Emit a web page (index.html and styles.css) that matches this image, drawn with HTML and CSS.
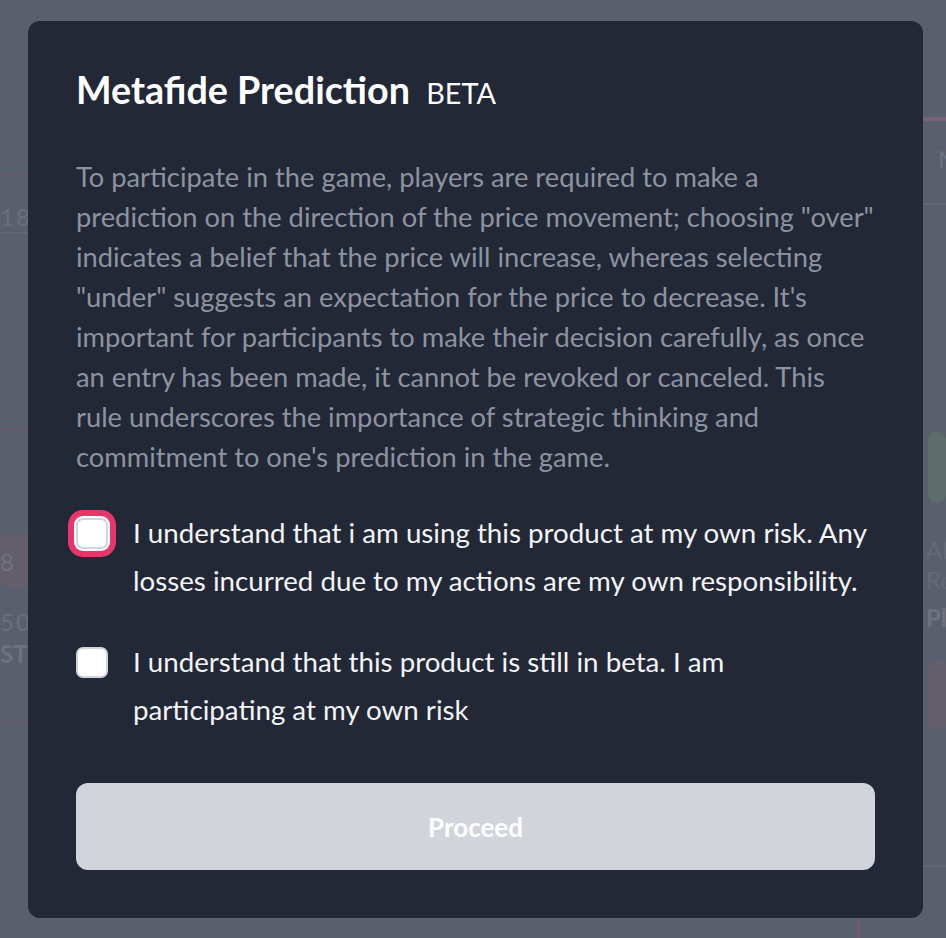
FILE: index.html
```html
<!DOCTYPE html>
<html lang="en">
<head>
<meta charset="utf-8">
<title>Metafide Prediction</title>
<link rel="stylesheet" href="styles.css">
</head>
<body>
<div class="page">
  <div class="col-left">
    <div class="bg-line pink l1"></div>
    <div class="bg-num n1">1845</div>
    <div class="bg-line gray l2"></div>
    <div class="bg-line pink l3"></div>
    <div class="bg-pill pink-pill p1">8</div>
    <div class="bg-num n2">50</div>
    <div class="bg-bold b1">ST</div>
    <div class="bg-line pink l4"></div>
  </div>
  <div class="col-mid">
    <div class="bg-vline"></div>
  </div>
  <div class="col-right">
    <div class="bg-line pink thick r1"></div>
    <div class="bg-head">N</div>
    <div class="bg-line gray r2"></div>
    <div class="bg-pill green-pill r3"></div>
    <div class="bg-small r4">Al</div>
    <div class="bg-small">Re</div>
    <div class="bg-bold r5">Pl</div>
    <div class="bg-pill pink-pill r6"></div>
    <div class="bg-line gray r7"></div>
  </div>
</div>

<div class="overlay">
  <div class="modal">
    <h2 class="title">Metafide Prediction <span class="beta">BETA</span></h2>
    <p class="desc">To participate in the game, players are required to make a prediction on the direction of the price movement; choosing "over" indicates a belief that the price will increase, whereas selecting "under" suggests an expectation for the price to decrease. It's important for participants to make their decision carefully, as once an entry has been made, it cannot be revoked or canceled. This rule underscores the importance of strategic thinking and commitment to one's prediction in the game.</p>
    <label class="check-row first">
      <span class="box-wrap"><span class="box focused"></span></span>
      <span class="check-text">I understand that i am using this product at my own risk. Any losses incurred due to my actions are my own responsibility.</span>
    </label>
    <label class="check-row second">
      <span class="box-wrap"><span class="box"></span></span>
      <span class="check-text">I understand that this product is still in beta. I am participating at my own risk</span>
    </label>
    <button class="proceed" type="button">Proceed</button>
  </div>
</div>
</body>
</html>
```

FILE: styles.css
```css
html, body {
  margin: 0;
  padding: 0;
}
body {
  background: #5a5f6d;
  font-family: "Lato", "Noto Sans", sans-serif;
  width: 946px;
  height: 938px;
  overflow: hidden;
}
.page {
  display: flex;
  height: 938px;
}
.col-left {
  width: 120px;
  display: flex;
  flex-direction: column;
}
.col-mid {
  flex: 1;
  display: flex;
  flex-direction: column;
  justify-content: flex-end;
  padding-left: 737px;
}
.col-right {
  width: 30px;
  display: flex;
  flex-direction: column;
}
.bg-line { height: 2px; }
.bg-line.pink { background: #685a6c; }
.bg-line.gray { background: #626776; }
.bg-line.thick { height: 4px; background: #7d5f7a; }
.l1 { margin-top: 174px; }
.n1 { color: #6a6f7c; font-size: 24px; line-height: 30px; margin-top: 26px; letter-spacing: 2px; }
.l2 { margin-top: 0; background: #5e6371; }
.l3 { margin-top: 194px; }
.bg-pill { border-radius: 10px; }
.pink-pill { background: #645e6b; }
.green-pill { background: #5d6e6a; }
.p1 { margin-top: 104px; height: 55px; color: #6f7380; font-size: 24px; line-height: 55px; }
.n2 { color: #6a6f7c; font-size: 24px; line-height: 30px; margin-top: 18px; letter-spacing: 2px; }
.b1 { margin-top: 2px; }
.bg-bold { color: #6e7280; font-weight: 700; font-size: 24px; line-height: 30px; }
.l4 { margin-top: 52px; }
.bg-vline {
  width: 3px;
  height: 20px;
  background: #735a72;
}
.col-right .r1 { margin-top: 117px; }
.bg-head { color: #6e7381; font-size: 24px; margin-top: 24px; line-height: 28px; padding-left: 22px; }
.r2 { margin-top: 30px; }
.r3 { margin-top: 226px; height: 72px; margin-left: 12px; }
.bg-small { color: #646977; font-size: 24px; line-height: 30px; padding-left: 10px; }
.r4 { margin-top: 32px; }
.r5 { margin-top: 8px; padding-left: 10px; }
.r6 { margin-top: 26px; height: 71px; margin-left: 12px; }
.r7 { margin-top: 135px; }

.overlay {
  position: fixed;
  inset: 0;
  padding: 21px 0 0 28px;
  display: flex;
  align-items: flex-start;
}
.modal {
  box-sizing: border-box;
  width: 895px;
  height: 897px;
  background: #222836;
  border-radius: 12px;
  padding: 47px 48px 48px 48px;
  display: flex;
  flex-direction: column;
}
.title {
  margin: 0;
  color: #ffffff;
  font-weight: 700;
  font-size: 37.7px;
  line-height: 44px;
}
.beta {
  font-weight: 400;
  font-size: 28.8px;
  margin-left: 7px;
}
.desc {
  margin: 42px 0 0 0;
  color: #8d93a0;
  font-size: 27.3px;
  line-height: 40px;
}
.check-row {
  display: flex;
  align-items: flex-start;
  gap: 25px;
}
.check-row.first { margin-top: 32px; }
.check-row.second { margin-top: 33px; }
.box-wrap {
  flex: none;
  width: 32px;
  height: 48px;
  display: flex;
  align-items: center;
  justify-content: center;
}
.box {
  box-sizing: border-box;
  width: 32px;
  height: 31px;
  background: #ffffff;
  border: 2px solid #d1d5db;
  border-radius: 7px;
}
.box.focused {
  box-shadow: 0 0 0 2px #ffffff, 0 0 0 8px #e8356a;
}
.check-text {
  color: #f3f4f6;
  font-size: 27.7px;
  line-height: 48px;
}
.proceed {
  margin-top: 49px;
  height: 87px;
  width: 100%;
  flex: none;
  border: 0;
  border-radius: 12px;
  background: #d1d5db;
  color: #ffffff;
  font-family: inherit;
  font-weight: 700;
  font-size: 26px;
}
```
